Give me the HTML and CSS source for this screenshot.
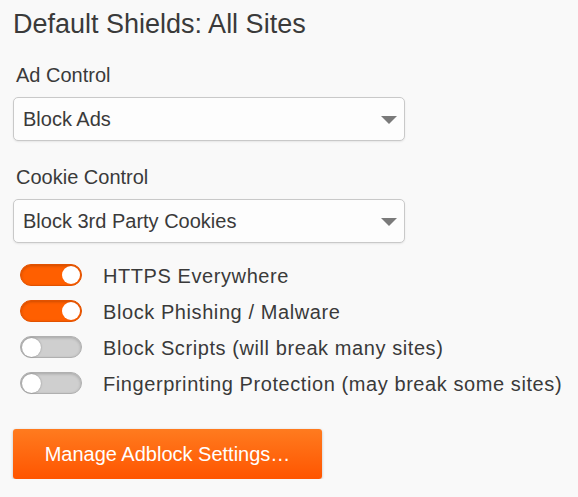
FILE: index.html
```html
<!DOCTYPE html>
<html>
<head>
<meta charset="utf-8">
<link rel="stylesheet" href="styles.css">
</head>
<body>
<div class="page">
  <h1 class="title">Default Shields: All Sites</h1>
  <div class="field">
    <div class="label">Ad Control</div>
    <div class="select"><span>Block Ads</span><span class="arrow"></span></div>
  </div>
  <div class="field">
    <div class="label">Cookie Control</div>
    <div class="select"><span>Block 3rd Party Cookies</span><span class="arrow"></span></div>
  </div>
  <div class="toggles">
    <div class="row"><span class="toggle on"><span class="knob"></span></span><span class="tlabel">HTTPS Everywhere</span></div>
    <div class="row"><span class="toggle on"><span class="knob"></span></span><span class="tlabel">Block Phishing / Malware</span></div>
    <div class="row"><span class="toggle"><span class="knob"></span></span><span class="tlabel">Block Scripts (will break many sites)</span></div>
    <div class="row"><span class="toggle"><span class="knob"></span></span><span class="tlabel">Fingerprinting Protection (may break some sites)</span></div>
  </div>
  <div class="btnwrap"><button class="btn">Manage Adblock Settings…</button></div>
</div>
</body>
</html>
```
FILE: styles.css
```css
html, body { margin: 0; padding: 0; background: #f9f9f9; }
body { font-family: "Liberation Sans", Arial, sans-serif; color: #3a3a3a; }
.page { padding: 8px 0 0 13px; width: 565px; box-sizing: border-box; }
.title { margin: 0; font-size: 27px; font-weight: normal; line-height: 32px; color: #3a3a3a; }
.field { display: flex; flex-direction: column; }
.label { font-size: 20px; line-height: 24px; margin: 23px 0 10px 3px; }
.field + .field .label { margin-top: 24px; }
.select {
  width: 392px; height: 44px; box-sizing: border-box;
  border: 1px solid #c9c9c9; border-radius: 5px; background: #fdfdfd;
  box-shadow: 0 1px 2px rgba(0,0,0,0.08);
  display: flex; align-items: center; justify-content: space-between;
  padding: 0 7px 0 9px; font-size: 20px; color: #3a3a3a;
}
.arrow {
  width: 0; height: 0;
  border-left: 8.5px solid transparent; border-right: 8.5px solid transparent;
  border-top: 8px solid #7a7a7a; margin-top: 1px;
}
.toggles { display: flex; flex-direction: column; margin-top: 14px; padding-left: 7px; }
.row { height: 36px; display: flex; align-items: center; }
.toggle {
  width: 62px; height: 22px; box-sizing: border-box; border-radius: 11px;
  background: #cfcfcf; border: 1px solid #b0b0b0;
  box-shadow: inset 0 1px 3px rgba(0,0,0,0.2);
  display: flex; align-items: center; padding: 0 1px; flex: none;
}
.toggle.on { background: #ff5f00; border-color: #e25200; justify-content: flex-end; padding: 0 1px; }
.knob {
  width: 18px; height: 18px; border-radius: 50%; background: #fff;
  box-shadow: 0 0 2px rgba(0,0,0,0.35);
}
.toggle .knob { width: 19px; height: 19px; }
.toggle.on .knob { width: 18px; height: 18px; box-shadow: none; }
.tlabel { margin-left: 21px; font-size: 20px; letter-spacing: 0.58px; color: #3a3a3a; margin-top: 2px; }
.btnwrap { margin-top: 28px; }
.btn {
  width: 309px; height: 50px; border: none; border-radius: 3px;
  background: linear-gradient(#ff7b1f, #ff5500);
  color: #fff; font-family: "Liberation Sans", Arial, sans-serif; font-size: 20px;
  box-shadow: 0 1px 3px rgba(0,0,0,0.25); padding: 0;
}
```
